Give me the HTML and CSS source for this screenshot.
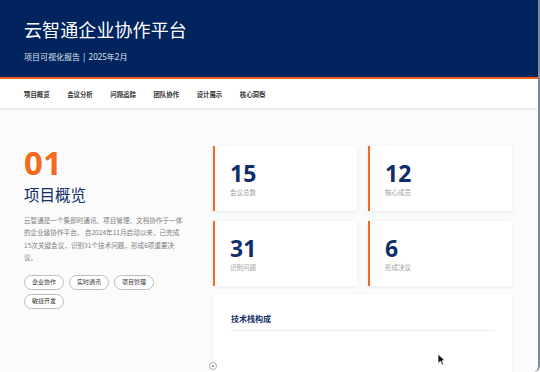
FILE: index.html
```html
<!DOCTYPE html>
<html lang="zh-CN">
  <head>
    <meta charset="UTF-8">
    <meta name="viewport" content="width=device-width, initial-scale=1.0">
    <title>云智通企业协作平台</title>
    <link rel="stylesheet" href="styles.css">
  </head>
  <body>
    <div class="window">
      <header class="hero">
        <h1>云智通企业协作平台</h1>
        <p class="subtitle">项目可视化报告 | 2025年2月</p>
      </header>

      <nav class="topnav">
        <a href="#overview">项目概览</a>
        <a href="#meetings">会议分析</a>
        <a href="#issues">问题追踪</a>
        <a href="#team">团队协作</a>
        <a href="#design">设计展示</a>
        <a href="#insights">核心洞察</a>
      </nav>

      <main class="section" id="overview">
        <div class="intro">
          <div class="section-num">01</div>
          <h2 class="section-title">项目概览</h2>
          <p class="section-text">云智通是一个集即时通讯、项目管理、文档协作于一体的企业级协作平台。 自2024年11月启动以来，已完成15次关键会议，识别31个技术问题，形成6项重要决议。</p>
          <div class="tags">
            <span class="tag">企业协作</span>
            <span class="tag">实时通讯</span>
            <span class="tag">项目管理</span>
            <span class="tag">敏捷开发</span>
          </div>
        </div>

        <div class="stats">
          <div class="stat-grid">
            <div class="stat-card">
              <div class="stat-value">15</div>
              <div class="stat-label">会议总数</div>
            </div>
            <div class="stat-card">
              <div class="stat-value">12</div>
              <div class="stat-label">核心成员</div>
            </div>
            <div class="stat-card">
              <div class="stat-value">31</div>
              <div class="stat-label">识别问题</div>
            </div>
            <div class="stat-card">
              <div class="stat-value">6</div>
              <div class="stat-label">形成决议</div>
            </div>
          </div>

          <div class="chart-card">
            <h3 class="chart-title">技术栈构成</h3>
          </div>
        </div>
      </main>
    </div>

    <!-- floating bits over the page -->
    <div class="scroll-dot"><span></span></div>
    <svg class="cursor" width="9" height="13" viewBox="0 0 9 13">
      <path d="M1 1 L1 10.5 L3.4 8.3 L5 12 L6.6 11.3 L5 7.8 L8 7.6 Z" fill="#111" stroke="#fff" stroke-width="0.8"/>
    </svg>
  </body>
</html>
```

FILE: styles.css
```css
:root {
  --navy: #01245f;
  --navy-text: #0f2d68;
  --orange: #f26a1b;
  --gray-text: #7d7d7d;
  --light-gray: #a0a0a0;
  --page-bg: #fbfbfb;
}

* {
  margin: 0;
  padding: 0;
  box-sizing: border-box;
}

html, body {
  height: 100%;
  overflow: hidden;
}

body {
  font-family: "Noto Sans", "Noto Sans CJK SC", sans-serif;
  background-color: var(--page-bg);
  color: #333;
}

.window {
  height: 100%;
  border-right: 2px solid #7f8a9c;
  border-bottom-right-radius: 6px;
  background-color: var(--page-bg);
}

/* header */
.hero {
  background-color: var(--navy);
  height: 79px;
  padding: 17px 24px 0;
  border-bottom: 2px solid var(--orange);
}

.hero h1 {
  color: #fff;
  font-size: 18px;
  font-weight: 400;
  line-height: 27px;
  letter-spacing: 0.1px;
}

.subtitle {
  color: #dfe5ef;
  font-size: 8px;
  line-height: 12px;
  margin-top: 7px;
}

/* nav */
.topnav {
  display: flex;
  gap: 17.6px;
  height: 29px;
  align-items: center;
  padding: 0 24px;
  background-color: #fff;
  box-shadow: 0 1px 3px rgba(0, 0, 0, 0.12);
  position: relative;
}

.topnav a {
  color: #333;
  text-decoration: none;
  font-size: 6.4px;
  font-weight: 700;
  padding-top: 1px;
}

/* main section */
.section {
  display: flex;
  gap: 25px;
  padding: 38px 26px 0 24px;
}

.intro {
  width: 164px;
  flex-shrink: 0;
  margin-top: -1px;
}

.section-num {
  color: var(--orange);
  font-size: 33px;
  font-weight: 700;
  line-height: 36px;
}

.section-title {
  color: var(--navy-text);
  font-size: 15.5px;
  font-weight: 400;
  line-height: 22px;
  margin-top: 3px;
}

.section-text {
  font-family: "Noto Sans CJK SC", sans-serif;
  width: 160px;
  color: var(--gray-text);
  font-size: 6.6px;
  line-height: 12.4px;
  margin-top: 8px;
}

.tags {
  display: flex;
  flex-wrap: wrap;
  gap: 4px 5px;
  margin-top: 11px;
}

.tag {
  display: inline-block;
  border: 1px solid #bdbdbd;
  border-radius: 8px;
  height: 15px;
  line-height: 13px;
  padding: 0 7px;
  font-size: 6px;
  color: #333;
  background-color: #fff;
}

/* stats */
.stats {
  flex: 1;
  display: flex;
  flex-direction: column;
  gap: 8px;
}

.stat-grid {
  display: grid;
  grid-template-columns: 1fr 1fr;
  gap: 10px 11px;
}

.stat-card {
  background-color: #fff;
  border-left: 2px solid var(--orange);
  box-shadow: 0 1px 4px rgba(0, 0, 0, 0.07);
  height: 65px;
  padding: 13px 15px 0;
}

.stat-value {
  color: var(--navy-text);
  font-size: 23px;
  font-weight: 700;
  line-height: 28px;
}

.stat-label {
  color: var(--light-gray);
  font-size: 6.5px;
  line-height: 10px;
  margin-top: 1px;
}

.chart-card {
  background-color: #fff;
  box-shadow: 0 1px 4px rgba(0, 0, 0, 0.07);
  height: 120px;
  padding: 19px 17px 0 18px;
}

.chart-title {
  color: var(--navy-text);
  font-size: 8px;
  font-weight: 700;
  line-height: 12px;
  padding-bottom: 5px;
  border-bottom: 1px solid #ececec;
}

/* overlays */
.scroll-dot {
  position: fixed;
  left: 209px;
  top: 362px;
  width: 8px;
  height: 8px;
  border: 1px solid #aaa;
  border-radius: 50%;
  background-color: #fff;
  display: flex;
  align-items: center;
  justify-content: center;
}

.scroll-dot span {
  width: 2px;
  height: 2px;
  border-radius: 50%;
  background-color: #888;
}

.cursor {
  position: fixed;
  left: 437px;
  top: 353px;
}
```
